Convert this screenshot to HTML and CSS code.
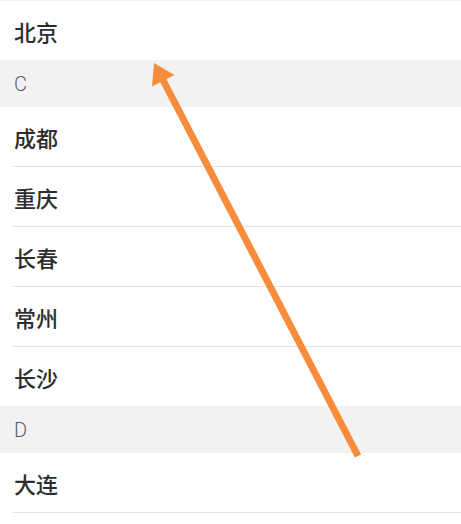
FILE: index.html
```html
<!DOCTYPE html>
<html lang="zh-CN">
<head>
<meta charset="utf-8">
<title>城市列表</title>
<link rel="stylesheet" href="styles.css">
</head>
<body>
<div class="page">
  <ul class="list">
    <li class="item first">北京</li>
    <li class="letter">C</li>
    <li class="item">成都</li>
    <li class="item">重庆</li>
    <li class="item">长春</li>
    <li class="item">常州</li>
    <li class="item last">长沙</li>
    <li class="letter">D</li>
    <li class="item">大连</li>
  </ul>
  <svg class="arrow" width="461" height="524" viewBox="0 0 461 524" aria-hidden="true">
    <line x1="358" y1="456" x2="163" y2="80" stroke="#f78d3c" stroke-width="7" stroke-linecap="butt"/>
    <polygon points="154,63 174.5,75 152,86.5" fill="#f78d3c"/>
  </svg>
</div>
</body>
</html>
```
FILE: styles.css
```css
html, body {
  margin: 0;
  padding: 0;
  background: #ffffff;
}
.page {
  position: relative;
  width: 461px;
  height: 524px;
  overflow: hidden;
}
.list {
  list-style: none;
  margin: 0;
  padding: 0;
  border-top: 1px solid #f1f1f1;
}
.item {
  height: 59px;
  display: flex;
  align-items: center;
  padding-left: 14px;
  padding-top: 1px;
  box-sizing: border-box;
  font-family: "Noto Sans CJK SC", "Noto Sans", sans-serif;
  font-size: 22px;
  font-weight: 500;
  color: #2e2e2e;
  position: relative;
}
.item::after {
  content: "";
  position: absolute;
  left: 13px;
  right: 0;
  bottom: -1px;
  height: 1px;
  background: #e4e4e4;
}
.item:not(.last):not(.first) {
  margin-bottom: 1px;
}
.item.first::after,
.item.last::after {
  display: none;
}
.letter {
  height: 47px;
  display: flex;
  align-items: center;
  padding-left: 14px;
  box-sizing: border-box;
  background: #f2f2f2;
  font-family: Roboto, "Noto Sans", sans-serif;
  font-size: 20px;
  font-weight: 300;
  color: #5e5e5e;
}
.arrow {
  position: absolute;
  left: 0;
  top: 0;
  pointer-events: none;
}
```
